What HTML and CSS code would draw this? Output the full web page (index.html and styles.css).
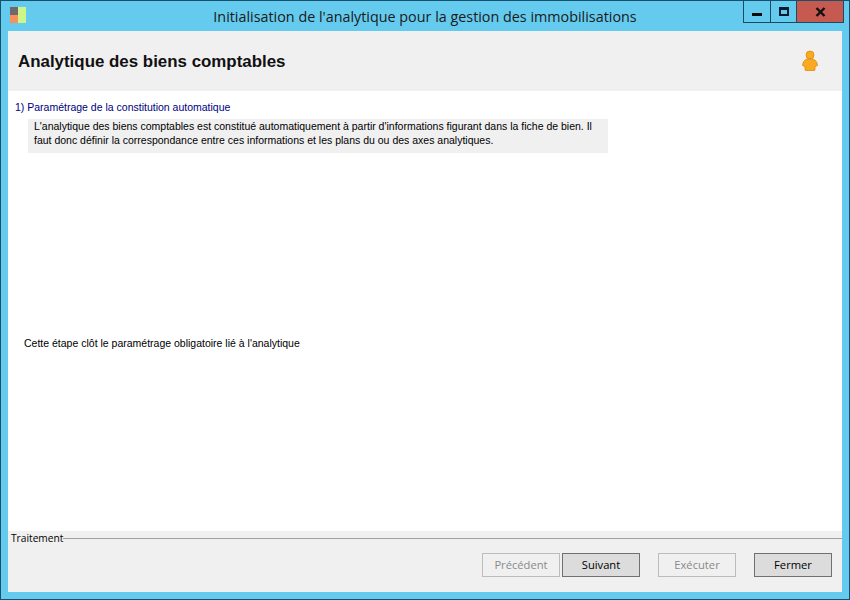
FILE: index.html
```html
<!DOCTYPE html>
<html lang="fr">
<head>
    <meta charset="UTF-8">
    <title>Initialisation de l'analytique pour la gestion des immobilisations</title>
    <link rel="stylesheet" href="styles.css">
</head>
<body>
    <div class="window">
        <header class="titlebar">
            <svg class="app-icon" width="16" height="16" viewBox="0 0 16 16">
                <rect x="0" y="0" width="8" height="8" fill="#6e6a6c"/>
                <rect x="0" y="8" width="8" height="8" fill="#f7905a"/>
                <rect x="8" y="0" width="8" height="16" fill="#cdf58a"/>
            </svg>
            <div class="title">Initialisation de l'analytique pour la gestion des immobilisations</div>
            <div class="controls">
                <div class="control control-min"><span class="min-glyph"></span></div>
                <div class="control control-max"><span class="max-glyph"></span></div>
                <div class="control control-close">
                    <svg width="11" height="10" viewBox="0 0 11 10">
                        <path d="M1.5 1 L9.5 9 M9.5 1 L1.5 9" stroke="#111" stroke-width="2.4" fill="none"/>
                    </svg>
                </div>
            </div>
        </header>

        <div class="client">
            <div class="banner">
                <h1>Analytique des biens comptables</h1>
                <svg class="person" width="18" height="22" viewBox="0 0 18 22">
                    <circle cx="9" cy="5" r="4" fill="#fba91f" stroke="#d98a12" stroke-width="0.8"/>
                    <path d="M6 9 Q9 10 12 9 Q15 10 16 13 L16.5 15.5 L14 16.5 L14 20 Q14 20.5 13 20.5 H5 Q4 20.5 4 20 L4 16.5 L1.5 15.5 L2 13 Q3 10 6 9 Z" fill="#fba91f" stroke="#d98a12" stroke-width="0.8"/>
                </svg>
            </div>

            <main class="content">
                <div class="step-label">1) Paramétrage de la constitution automatique</div>
                <div class="info-box">L'analytique des biens comptables est constitué automatiquement à partir d'informations figurant dans la fiche de bien. Il faut donc définir la correspondance entre ces informations et les plans du ou des axes analytiques.</div>
                <div class="note">Cette étape clôt le paramétrage obligatoire lié à l'analytique</div>
            </main>

            <footer class="footer">
                <div class="group-title"><span>Traitement</span></div>
                <div class="buttons">
                    <button class="btn" disabled>Précédent</button>
                    <button class="btn">Suivant</button>
                    <button class="btn btn-gap" disabled>Exécuter</button>
                    <button class="btn btn-gap">Fermer</button>
                </div>
            </footer>
        </div>
    </div>
</body>
</html>
```

FILE: styles.css
```css
* {
    margin: 0;
    padding: 0;
    box-sizing: border-box;
}

body {
    width: 850px;
    height: 600px;
    overflow: hidden;
    font-family: "Liberation Sans", Arial, sans-serif;
    color: #000;
}

.window {
    width: 850px;
    height: 600px;
    display: flex;
    flex-direction: column;
    background-color: #64cbee;
    border: 1px solid #16506c;
    padding: 0 7px 7px 7px;
}

.titlebar {
    height: 30px;
    flex: none;
    display: flex;
    align-items: flex-start;
    position: relative;
}

.app-icon {
    margin: 6px 0 0 2px;
}

.title {
    position: absolute;
    left: 0;
    right: 0;
    top: 6px;
    text-align: center;
    font-family: "Open Sans", sans-serif;
    font-size: 14.35px;
    line-height: 20px;
    color: #1a1a1a;
}

.controls {
    margin-left: auto;
    margin-right: -2px;
    display: flex;
    height: 22px;
    position: relative;
    border: 1px solid #1d4a60;
    border-top: none;
}

.control {
    display: flex;
    align-items: center;
    justify-content: center;
}

.control-min {
    width: 27px;
    border-right: 1px solid #1d4a60;
}

.control-max {
    width: 26px;
    border-right: 1px solid #1d4a60;
}

.control-close {
    width: 46px;
    background-color: #c75a50;
}

.min-glyph {
    width: 10px;
    height: 3px;
    margin-top: 5px;
    background-color: #0b0b0b;
}

.max-glyph {
    width: 10px;
    height: 9px;
    border: 2px solid #0a1a30;
    border-top-width: 3px;
}

.client {
    flex: 1;
    display: flex;
    flex-direction: column;
    background-color: #fff;
    min-height: 0;
}

.banner {
    height: 60px;
    flex: none;
    display: flex;
    align-items: center;
    justify-content: space-between;
    padding: 0 23px 0 10px;
    background-color: #f0f0f0;
}

.banner h1 {
    padding-top: 1px;
    font-family: "Liberation Sans", Arial, sans-serif;
    font-size: 16.9px;
    font-weight: bold;
    color: #111;
}

.content {
    flex: 1;
    padding: 9px 0 0 7px;
    font-size: 10.5px;
}

.step-label {
    line-height: 14px;
    color: #000080;
}

.info-box {
    width: 580px;
    height: 34px;
    margin: 5px 0 0 13px;
    padding: 0 6px;
    line-height: 14px;
    background-color: #f0f0f0;
}

.note {
    margin: 183px 0 0 9px;
    line-height: 14px;
}

.footer {
    height: 61px;
    flex: none;
    background-color: #f0f0f0;
    font-family: "Open Sans", sans-serif;
}

.group-title {
    display: flex;
    align-items: center;
    height: 14px;
    padding-left: 3px;
    font-size: 10.2px;
}

.group-title::after {
    content: "";
    flex: 1;
    height: 1px;
    background-color: #a0a0a0;
}

.buttons {
    display: flex;
    justify-content: flex-end;
    gap: 2px;
    margin-top: 8px;
    padding-right: 10px;
}

.btn {
    width: 78px;
    height: 24px;
    padding-bottom: 2px;
    font-family: "Open Sans", sans-serif;
    font-size: 11.2px;
    color: #000;
    background-color: #dcdcdc;
    border: 1px solid #707070;
}

.btn:disabled {
    color: #8a8a8a;
    background-color: #f0f0f0;
    border-color: #bcbcbc;
}

.btn-gap {
    margin-left: 16px;
}
```
